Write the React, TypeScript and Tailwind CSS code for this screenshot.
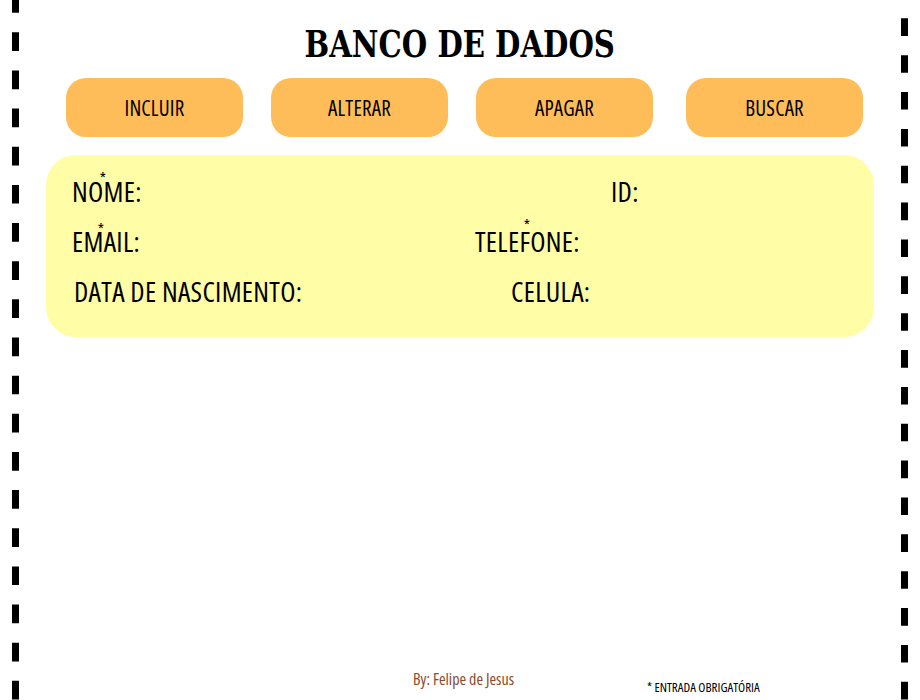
function DashColumn({ dash, gap, offset }: { dash: number; gap: number; offset: number }) {
  return (
    <svg width="7" height="700" viewBox="0 0 7 700" className="block">
      <line x1="3.5" y1="0" x2="3.5" y2="700" stroke="#000" strokeWidth="7" strokeDasharray={`${dash} ${gap}`} strokeDashoffset={offset} />
    </svg>
  );
}

function Req({ children, left, top }: { children: React.ReactNode; left: string; top: string }) {
  return (
    <span className="relative">
      {children}
      <span className={`absolute ${left} ${top} -translate-x-1/2 text-[16px] leading-none`}>*</span>
    </span>
  );
}

export default function App() {
  const buttons = [
    { label: "INCLUIR", cls: "" },
    { label: "ALTERAR", cls: "ml-[28px]" },
    { label: "APAGAR", cls: "ml-[28px]" },
    { label: "BUSCAR", cls: "ml-[33px]" },
  ];
  return (
    <div className="flex w-[920px] h-[700px] bg-white text-black font-['Open_Sans',sans-serif] font-stretch-condensed overflow-hidden">
      <div className="w-[46px] shrink-0 pl-[12px]">
        <DashColumn dash={18.7} gap={19.45} offset={5.85} />
      </div>

      <main className="flex flex-col w-[828px] shrink-0">
        <div className="pt-[22px] text-center">
          <h1 className="inline-block scale-x-[0.854] font-['DejaVu_Serif_Condensed','DejaVu_Serif',serif] font-bold text-[38px] leading-[44px] whitespace-nowrap">
            BANCO DE DADOS
          </h1>
        </div>

        <div className="flex mt-[12px] pl-[20px]">
          {buttons.map((b) => (
            <button
              key={b.label}
              className={`${b.cls} w-[177px] h-[59px] rounded-[20px] bg-[#ffbd59] text-[21px] font-medium tracking-[0.2px] flex items-center justify-center pt-[2px]`}
            >
              {b.label}
            </button>
          ))}
        </div>

        <section className="mt-[18px] h-[182px] rounded-[30px] bg-[#fffda6] pt-[11px] text-[28px] leading-[50px] font-medium tracking-[0.3px]">
          <div className="flex pl-[26px]">
            <div className="w-[539px]">
              <Req left="left-[31px]" top="top-[-2px]">NOME:</Req>
            </div>
            <div>ID:</div>
          </div>
          <div className="flex pl-[26px]">
            <div className="w-[403px]">
              <Req left="left-[29px]" top="top-[-1px]">EMAIL:</Req>
            </div>
            <div>
              <Req left="left-[52px]" top="top-[-5px]">TELEFONE:</Req>
            </div>
          </div>
          <div className="flex pl-[28px]">
            <div className="w-[437px]">DATA DE NASCIMENTO:</div>
            <div>CELULA:</div>
          </div>
        </section>

        <footer className="mt-auto flex pl-[367px] pb-[5px]">
          <div className="w-[234px] text-[16px] leading-[20px] text-[#8b4a2b]">By: Felipe de Jesus</div>
          <div className="mt-[10px] text-[13px] leading-[16px] font-medium">* ENTRADA OBRIGATÓRIA</div>
        </footer>
      </main>

      <div className="w-[46px] shrink-0 pl-[27px]">
        <DashColumn dash={17.6} gap={19.26} offset={18.56} />
      </div>
    </div>
  );
}
